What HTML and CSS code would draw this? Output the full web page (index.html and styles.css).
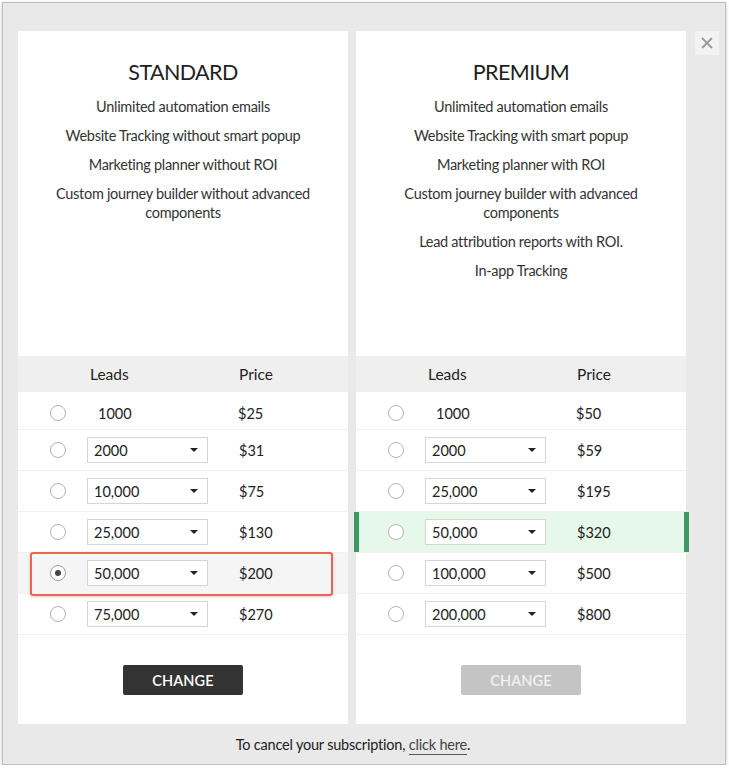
FILE: index.html
```html
<!DOCTYPE html>
<html>
<head>
<meta charset="utf-8">
<link rel="stylesheet" href="styles.css">
</head>
<body>
<div class="modal">
  <div class="plans">
    <section class="card">
      <div class="card-top">
        <h2 class="plan-title">STANDARD</h2>
        <ul class="features">
          <li>Unlimited automation emails</li>
          <li>Website Tracking without smart popup</li>
          <li>Marketing planner without ROI</li>
          <li>Custom journey builder without advanced components</li>
        </ul>
      </div>
      <div class="table-head"><span class="th-leads">Leads</span><span class="th-price">Price</span></div>
      <div class="row first"><span class="radio"></span><span class="plain">1000</span><span class="price">$25</span></div>
      <div class="row"><span class="radio"></span><span class="select">2000<i class="caret"></i></span><span class="price">$31</span></div>
      <div class="row"><span class="radio"></span><span class="select">10,000<i class="caret"></i></span><span class="price">$75</span></div>
      <div class="row"><span class="radio"></span><span class="select">25,000<i class="caret"></i></span><span class="price">$130</span></div>
      <div class="row selected"><span class="radio checked"></span><span class="select">50,000<i class="caret"></i></span><span class="price">$200</span><span class="focus-ring"></span></div>
      <div class="row"><span class="radio"></span><span class="select">75,000<i class="caret"></i></span><span class="price">$270</span></div>
      <div class="actions"><button class="btn">CHANGE</button></div>
    </section>
    <section class="card">
      <div class="card-top">
        <h2 class="plan-title">PREMIUM</h2>
        <ul class="features">
          <li>Unlimited automation emails</li>
          <li>Website Tracking with smart popup</li>
          <li>Marketing planner with ROI</li>
          <li>Custom journey builder with advanced components</li>
          <li>Lead attribution reports with ROI.</li>
          <li>In-app Tracking</li>
        </ul>
      </div>
      <div class="table-head"><span class="th-leads">Leads</span><span class="th-price">Price</span></div>
      <div class="row first"><span class="radio"></span><span class="plain">1000</span><span class="price">$50</span></div>
      <div class="row"><span class="radio"></span><span class="select">2000<i class="caret"></i></span><span class="price">$59</span></div>
      <div class="row"><span class="radio"></span><span class="select">25,000<i class="caret"></i></span><span class="price">$195</span></div>
      <div class="row current"><span class="radio"></span><span class="select">50,000<i class="caret"></i></span><span class="price">$320</span></div>
      <div class="row"><span class="radio"></span><span class="select">100,000<i class="caret"></i></span><span class="price">$500</span></div>
      <div class="row"><span class="radio"></span><span class="select">200,000<i class="caret"></i></span><span class="price">$800</span></div>
      <div class="actions"><button class="btn disabled">CHANGE</button></div>
    </section>
    <button class="close" aria-label="Close">
      <svg width="12" height="12" viewBox="0 0 12 12"><path d="M1 1 L11 11 M11 1 L1 11" stroke="#9a9a9a" stroke-width="1.8" fill="none"/></svg>
    </button>
  </div>
  <div class="footer"><p class="footer-text">To cancel your subscription, <a class="link">click here</a>.</p></div>
</div>
</body>
</html>
```

FILE: styles.css
```css
html, body {
  margin: 0;
  padding: 0;
  background: #ffffff;
}
body {
  font-family: "Lato", "Source Sans Pro", "Noto Sans", sans-serif;
  color: #222;
}
.modal {
  margin: 2px 3px 0 2px;
  width: 722px;
  height: 733px;
  border: 1px solid #bdbdbd;
  box-shadow: 0 1px 3px rgba(0,0,0,0.25);
  background: #e9e9e9;
  padding: 28px 0 0 0;
  box-sizing: content-box;
  display: flex;
  flex-direction: column;
}
.plans {
  display: flex;
  align-items: flex-start;
  padding-left: 15px;
}
.card {
  width: 330px;
  height: 693px;
  background: #fff;
  display: flex;
  flex-direction: column;
  margin-right: 8px;
}
.card + .card { margin-right: 0; }
.card-top {
  height: 325px;
  padding: 28px 18px 0;
  box-sizing: border-box;
  text-align: center;
}
.plan-title {
  margin: 0;
  font-size: 21.5px;
  line-height: 26px;
  font-weight: 400;
  color: #1e1e1e;
  letter-spacing: -0.6px;
}
.features {
  list-style: none;
  margin: 12px 0 0;
  padding: 0;
}
.features li {
  font-size: 14.5px;
  line-height: 19px;
  color: #333;
  margin-bottom: 10px;
  letter-spacing: -0.3px;
}
.table-head {
  height: 36px;
  background: #efefef;
  display: flex;
  align-items: center;
  font-size: 15.5px;
  color: #222;
}
.th-leads { margin-left: 72px; width: 149px; }
.row {
  height: 40px;
  border-bottom: 1px solid #f1f1f1;
  display: flex;
  align-items: center;
  position: relative;
  font-size: 14.5px;
  color: #222;
}
.row.first {
  height: 32px;
  padding-top: 5px;
}
.radio {
  width: 14px;
  height: 14px;
  border: 1px solid #b3b3b3;
  border-radius: 50%;
  margin-left: 32px;
  background: #fff;
  flex: none;
  display: flex;
  align-items: center;
  justify-content: center;
}
.radio.checked { border-color: #9c9c9c; }
.radio.checked::after {
  content: "";
  width: 6px;
  height: 6px;
  border-radius: 50%;
  background: #444;
}
.plain {
  margin-left: 32px;
  width: 109px;
}
.select {
  margin-left: 21px;
  width: 121px;
  height: 26px;
  border: 1px solid #d5d5d5;
  box-sizing: border-box;
  padding-left: 6px;
  display: flex;
  align-items: center;
  justify-content: space-between;
  background: #fff;
  flex: none;
}
.caret {
  width: 0;
  height: 0;
  border-left: 4px solid transparent;
  border-right: 4px solid transparent;
  border-top: 4px solid #222;
  margin-right: 9px;
}
.price { margin-left: 31px; }
.row.selected { background: #f5f5f5; }
.focus-ring {
  position: absolute;
  left: 12px;
  right: 15px;
  top: -1px;
  bottom: -3px;
  border: 2px solid #ef6357;
  border-radius: 3px;
  box-shadow: 0 1px 3px rgba(0,0,0,0.2);
  pointer-events: none;
}
.row.current { background: #e6f8ea; }
.row.current::before,
.row.current::after {
  content: "";
  position: absolute;
  top: 0;
  bottom: 0;
  width: 5px;
  background: #3f9963;
}
.row.current::before { left: -2px; }
.row.current::after { right: -3px; }
.actions {
  display: flex;
  justify-content: center;
  margin-top: 30px;
}
.btn {
  width: 120px;
  height: 30px;
  border: none;
  border-radius: 2px;
  background: #333;
  color: #fff;
  font-family: inherit;
  font-size: 14.5px;
  font-weight: 600;
  letter-spacing: 0.1px;
  padding: 0;
}
.btn.disabled {
  background: #c4c4c4;
  color: #f1f1f1;
}
.close {
  margin-left: 9px;
  width: 24px;
  height: 24px;
  border: none;
  padding: 0;
  background: #f2f2f2;
  display: flex;
  align-items: center;
  justify-content: center;
}
.footer {
  height: 41px;
  display: flex;
  align-items: center;
  justify-content: center;
  padding: 0 37px 0 15px;
}
.footer-text {
  margin: 0;
  font-size: 14.5px;
  color: #222;
  letter-spacing: -0.2px;
}
.link {
  color: #444;
  border-bottom: 1px solid #555;
  padding-bottom: 1px;
}
```
